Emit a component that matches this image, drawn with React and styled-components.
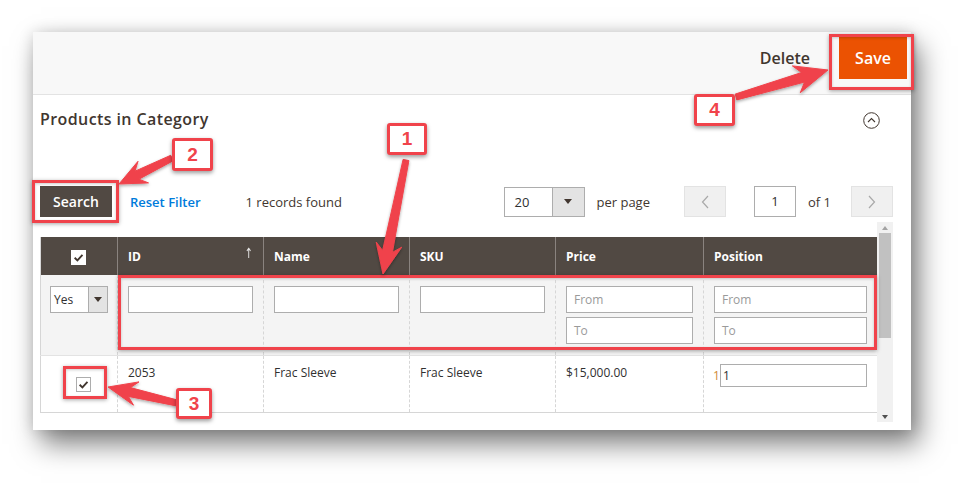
import React from 'react';
import styled, { createGlobalStyle } from 'styled-components';

const RED = '#f0434b';

const Global = createGlobalStyle`
  html, body { margin: 0; padding: 0; background: #fff; }
  body { font-family: "Open Sans", "Liberation Sans", sans-serif; color: #41362f; }
  * { box-sizing: border-box; }
`;

const Page = styled.div`
  position: relative;
  width: 980px;
  height: 495px;
  overflow: hidden;
  background: #fff;
  padding: 32px 0 0 33px;
`;

const Panel = styled.div`
  width: 878px;
  height: 398px;
  background: #fff;
  box-shadow: 8px 14px 26px rgba(0, 0, 0, 0.5), 0 0 14px rgba(0, 0, 0, 0.14);
  display: flex;
  flex-direction: column;
`;

const TopBar = styled.div`
  height: 63px;
  flex: none;
  background: #f8f8f8;
  border-bottom: 1px solid #e3e3e3;
  display: flex;
  align-items: flex-start;
  justify-content: flex-end;
  padding: 5px 4px 0 0;
`;

const DeleteLink = styled.span`
  font-size: 16px;
  font-weight: 600;
  color: #41362f;
  line-height: 42px;
  margin-right: 29px;
`;

const SaveButton = styled.button`
  width: 68px;
  height: 42px;
  background: #eb5202;
  border: 1px solid #eb5202;
  color: #fff;
  font-family: "Open Sans", "Liberation Sans", sans-serif;
  font-size: 16px;
  font-weight: 600;
  padding: 0;
`;

const Content = styled.div`
  flex: 1;
  display: flex;
  flex-direction: column;
  padding: 0 18px 0 7px;
`;

const TitleRow = styled.div`
  height: 48px;
  display: flex;
  align-items: center;
  justify-content: space-between;
`;

const Title = styled.h2`
  margin: 0;
  font-size: 16px;
  font-weight: 600;
  color: #41362f;
  letter-spacing: 0.4px;
`;

const CollapseIcon = styled.svg`
  margin-right: 13px;
  margin-top: 3px;
`;

const Toolbar = styled.div`
  margin-top: 43px;
  height: 31px;
  display: flex;
  align-items: center;
  font-size: 13px;
`;

const SearchButton = styled.button`
  width: 72px;
  height: 31px;
  background: #514943;
  border: 1px solid #514943;
  color: #fff;
  font-family: "Open Sans", "Liberation Sans", sans-serif;
  font-size: 14px;
  font-weight: 600;
  padding: 0;
`;

const ResetLink = styled.span`
  margin-left: 18px;
  color: #007bdb;
  font-weight: 600;
  font-size: 13px;
`;

const Records = styled.span`
  margin-left: 45px;
  color: #41362f;
  font-size: 13px;
`;

const RightGroup = styled.div`
  margin-left: auto;
  display: flex;
  align-items: center;
`;

const PageSizeSelect = styled.div`
  width: 81px;
  height: 30px;
  border: 1px solid #adadad;
  display: flex;
  background: #fff;
`;

const SelectValue = styled.span`
  flex: 1;
  padding-left: 10px;
  line-height: 28px;
  font-size: 13px;
  color: #303030;
`;

const SelectArrow = styled.span`
  width: ${(p) => p.$w}px;
  background: #e3e3e3;
  border-left: 1px solid #adadad;
  display: flex;
  align-items: center;
  justify-content: center;
  &::after {
    content: '';
    border-left: 4px solid transparent;
    border-right: 4px solid transparent;
    border-top: 5px solid #41362f;
  }
`;

const Label = styled.span`
  margin-left: ${(p) => p.$ml}px;
  color: #41362f;
  font-size: 13px;
`;

const PagerButton = styled.div`
  margin-left: ${(p) => p.$ml}px;
  width: 42px;
  height: 31px;
  background: #f0f0f0;
  border: 1px solid #e3e3e3;
  display: flex;
  align-items: center;
  justify-content: center;
`;

const PageInput = styled.div`
  margin-left: 28px;
  width: 42px;
  height: 31px;
  border: 1px solid #adadad;
  background: #fff;
  text-align: center;
  line-height: 29px;
  font-size: 13px;
  color: #303030;
`;

const GridWrap = styled.div`
  margin-top: 5px;
  height: 200px;
  display: flex;
`;

const TableArea = styled.div`
  width: 837px;
  padding-top: 15px;
`;

const Scrollbar = styled.div`
  width: 16px;
  background: #f1f1f1;
  display: flex;
  flex-direction: column;
  align-items: center;
`;

const ScrollArrow = styled.div`
  height: 11px;
  display: flex;
  align-items: center;
  justify-content: center;
  &::after {
    content: '';
    border-left: 3.5px solid transparent;
    border-right: 3.5px solid transparent;
    ${(p) => (p.$down ? 'border-top: 4px solid #505050;' : 'border-bottom: 4px solid #a3a3a3;')}
  }
`;

const ScrollThumb = styled.div`
  width: 12px;
  height: 105px;
  background: #c1c1c1;
`;

const ScrollTrack = styled.div`
  flex: 1;
`;

const Table = styled.table`
  width: 837px;
  table-layout: fixed;
  border-collapse: collapse;
  font-size: 12px;
  border-left: 1px solid #d6d6d6;
  border-right: 1px solid #d6d6d6;
  border-bottom: 1px solid #d6d6d6;
`;

const Th = styled.th`
  height: 38px;
  background: #514943;
  color: #fff;
  font-weight: 700;
  font-size: 12px;
  text-align: left;
  padding: 0 11px 0 10px;
  border-left: 1px solid #8a837f;
  &:first-child {
    border-left: none;
    text-align: center;
  }
`;

const HeadInner = styled.div`
  display: flex;
  justify-content: space-between;
  align-items: center;
`;

const SortArrow = styled.span`
  font-family: "DejaVu Sans", sans-serif;
  font-size: 14px;
  font-weight: 400;
  color: #e8e8e8;
  margin-top: -6px;
  margin-right: -3px;
  transform: scaleX(0.7);
`;

const FilterTd = styled.td`
  background: #f4f4f4;
  padding: 11px 10px;
  height: 80px;
  vertical-align: top;
  border-left: 1px dashed #d6d6d6;
  &:first-child {
    border-left: none;
    padding-left: 9px;
  }
`;

const FilterInput = styled.div`
  height: 27px;
  border: 1px solid #adadad;
  background: #fff;
  padding-left: 7px;
  line-height: 25px;
  font-size: 12px;
  color: #9a9a9a;
  & + & {
    margin-top: 4px;
  }
`;

const YesSelect = styled.div`
  width: 58px;
  height: 27px;
  border: 1px solid #adadad;
  background: #fff;
  display: flex;
`;

const YesValue = styled.span`
  flex: 1;
  padding-left: 3px;
  line-height: 25px;
  font-size: 12px;
  color: #303030;
`;

const DataTd = styled.td`
  height: 57px;
  padding: 8px 10px;
  vertical-align: top;
  color: #303030;
  font-size: 12px;
  line-height: 18px;
  border-left: 1px dashed #d6d6d6;
  border-top: 1px solid #e3e3e3;
  &:first-child {
    border-left: none;
    text-align: center;
    padding: 19px 0 0 8px;
  }
`;

const CheckBox = styled.span`
  display: inline-flex;
  width: ${(p) => p.$size}px;
  height: ${(p) => p.$size}px;
  background: #fff;
  border: 1px solid ${(p) => (p.$light ? '#fff' : '#adadad')};
  align-items: center;
  justify-content: center;
  vertical-align: middle;
`;

const PositionCell = styled.div`
  display: flex;
  align-items: center;
  margin-left: -1px;
`;

const PositionLabel = styled.span`
  color: #d08a36;
  width: 7px;
`;

const PositionInput = styled.div`
  flex: 1;
  height: 23px;
  border: 1px solid #adadad;
  background: #fff;
  padding-left: 2px;
  line-height: 21px;
  font-size: 12px;
  color: #303030;
`;

/* Annotation overlays */
const Highlight = styled.div`
  position: absolute;
  left: ${(p) => p.$x}px;
  top: ${(p) => p.$y}px;
  width: ${(p) => p.$w}px;
  height: ${(p) => p.$h}px;
  border: 3px solid ${RED};
  box-shadow: 0 1px 4px rgba(0, 0, 0, 0.35), inset 0 1px 3px rgba(0, 0, 0, 0.2);
  pointer-events: none;
`;

const Badge = styled.div`
  position: absolute;
  left: ${(p) => p.$x}px;
  top: ${(p) => p.$y}px;
  width: ${(p) => p.$w}px;
  height: ${(p) => p.$h}px;
  background: #fff;
  border: 3px solid ${RED};
  border-radius: 3px;
  box-shadow: 0 2px 4px rgba(0, 0, 0, 0.4);
  color: ${RED};
  font-family: "Liberation Sans", Arial, sans-serif;
  font-weight: 700;
  font-size: 19px;
  display: flex;
  align-items: center;
  justify-content: center;
`;

const ArrowLayer = styled.svg`
  position: absolute;
  left: 0;
  top: 0;
  pointer-events: none;
`;

function arrowPoints(sx, sy, tx, ty, headLen, headW, w0, w1) {
  const dx = tx - sx;
  const dy = ty - sy;
  const L = Math.hypot(dx, dy);
  const ux = dx / L;
  const uy = dy / L;
  const nx = -uy;
  const ny = ux;
  const bx = tx - ux * headLen;
  const by = ty - uy * headLen;
  const p = (x, y) => `${x.toFixed(1)},${y.toFixed(1)}`;
  return [
    p(sx + (nx * w0) / 2, sy + (ny * w0) / 2),
    p(bx + ux * 4 + (nx * w1) / 2, by + uy * 4 + (ny * w1) / 2),
    p(bx - ux * 3 + (nx * headW) / 2, by - uy * 3 + (ny * headW) / 2),
    p(tx, ty),
    p(bx - ux * 3 - (nx * headW) / 2, by - uy * 3 - (ny * headW) / 2),
    p(bx + ux * 4 - (nx * w1) / 2, by + uy * 4 - (ny * w1) / 2),
    p(sx - (nx * w0) / 2, sy - (ny * w0) / 2),
  ].join(' ');
}

const arrows = [
  { s: [406, 160], t: [383, 274], hl: 27, hw: 26, w0: 6, w1: 10 },
  { s: [172, 158], t: [119, 184], hl: 24, hw: 24, w0: 6, w1: 9 },
  { s: [177, 403], t: [108, 387], hl: 26, hw: 24, w0: 6, w1: 9 },
  { s: [736, 97], t: [828, 70], hl: 30, hw: 28, w0: 6, w1: 10 },
];

const Check = ({ size = 10, color = '#41362f' }) => (
  <svg width={size} height={size} viewBox="0 0 10 10">
    <path d="M1.5 5.2 L4 7.6 L8.6 2.6" fill="none" stroke={color} strokeWidth="1.7" />
  </svg>
);

const columns = [
  { key: 'id', label: 'ID', sort: true },
  { key: 'name', label: 'Name' },
  { key: 'sku', label: 'SKU' },
  { key: 'price', label: 'Price' },
  { key: 'position', label: 'Position' },
];

const widths = [77, 146, 146, 146, 148, 174];

export default function App() {
  return (
    <Page>
      <Global />
      <Panel>
        <TopBar>
          <DeleteLink>Delete</DeleteLink>
          <SaveButton>Save</SaveButton>
        </TopBar>
        <Content>
          <TitleRow>
            <Title>Products in Category</Title>
            <CollapseIcon width="17" height="17" viewBox="0 0 17 17">
              <circle cx="8.5" cy="8.5" r="7.8" fill="none" stroke="#41362f" strokeWidth="1" />
              <path d="M5 10 L8.5 6.5 L12 10" fill="none" stroke="#41362f" strokeWidth="1.1" />
            </CollapseIcon>
          </TitleRow>
          <Toolbar>
            <SearchButton>Search</SearchButton>
            <ResetLink>Reset Filter</ResetLink>
            <Records>1 records found</Records>
            <RightGroup>
              <PageSizeSelect>
                <SelectValue>20</SelectValue>
                <SelectArrow $w={32} />
              </PageSizeSelect>
              <Label $ml={12}>per page</Label>
              <PagerButton $ml={34}>
                <svg width="8" height="14" viewBox="0 0 8 14">
                  <path d="M7 1 L1.5 7 L7 13" fill="none" stroke="#a9a9a9" strokeWidth="1.2" />
                </svg>
              </PagerButton>
              <PageInput>1</PageInput>
              <Label $ml={12}>of 1</Label>
              <PagerButton $ml={20}>
                <svg width="8" height="14" viewBox="0 0 8 14">
                  <path d="M1 1 L6.5 7 L1 13" fill="none" stroke="#a9a9a9" strokeWidth="1.2" />
                </svg>
              </PagerButton>
            </RightGroup>
          </Toolbar>
          <GridWrap>
            <TableArea>
              <Table>
                <colgroup>
                  {widths.map((w, i) => (
                    <col key={i} style={{ width: w }} />
                  ))}
                </colgroup>
                <thead>
                  <tr>
                    <Th>
                      <CheckBox $size={15} $light>
                        <Check size={11} />
                      </CheckBox>
                    </Th>
                    {columns.map((c) => (
                      <Th key={c.key}>
                        <HeadInner>
                          <span>{c.label}</span>
                          {c.sort && <SortArrow>↑</SortArrow>}
                        </HeadInner>
                      </Th>
                    ))}
                  </tr>
                  <tr>
                    <FilterTd>
                      <YesSelect>
                        <YesValue>Yes</YesValue>
                        <SelectArrow $w={19} />
                      </YesSelect>
                    </FilterTd>
                    <FilterTd>
                      <FilterInput />
                    </FilterTd>
                    <FilterTd>
                      <FilterInput />
                    </FilterTd>
                    <FilterTd>
                      <FilterInput />
                    </FilterTd>
                    <FilterTd>
                      <FilterInput>From</FilterInput>
                      <FilterInput>To</FilterInput>
                    </FilterTd>
                    <FilterTd>
                      <FilterInput>From</FilterInput>
                      <FilterInput>To</FilterInput>
                    </FilterTd>
                  </tr>
                </thead>
                <tbody>
                  <tr>
                    <DataTd>
                      <CheckBox $size={15}>
                        <Check size={11} />
                      </CheckBox>
                    </DataTd>
                    <DataTd>2053</DataTd>
                    <DataTd>Frac Sleeve</DataTd>
                    <DataTd>Frac Sleeve</DataTd>
                    <DataTd>$15,000.00</DataTd>
                    <DataTd>
                      <PositionCell>
                        <PositionLabel>1</PositionLabel>
                        <PositionInput>1</PositionInput>
                      </PositionCell>
                    </DataTd>
                  </tr>
                </tbody>
              </Table>
            </TableArea>
            <Scrollbar>
              <ScrollArrow />
              <ScrollThumb />
              <ScrollTrack />
              <ScrollArrow $down />
            </Scrollbar>
          </GridWrap>
        </Content>
      </Panel>

      <Highlight $x={829} $y={34} $w={85} $h={56} />
      <Highlight $x={32} $y={180} $w={87} $h={43} />
      <Highlight $x={118} $y={275} $w={759} $h={75} />
      <Highlight $x={63} $y={366} $w={44} $h={33} />

      <ArrowLayer width="980" height="495" viewBox="0 0 980 495">
        <defs>
          <filter id="ash" x="-20%" y="-20%" width="140%" height="140%">
            <feDropShadow dx="0" dy="1.5" stdDeviation="1.5" floodColor="#000" floodOpacity="0.35" />
          </filter>
        </defs>
        {arrows.map((a, i) => (
          <polygon
            key={i}
            points={arrowPoints(a.s[0], a.s[1], a.t[0], a.t[1], a.hl, a.hw, a.w0, a.w1)}
            fill={RED}
            strokeLinejoin="round"
            stroke={RED}
            strokeWidth="1"
            filter="url(#ash)"
          />
        ))}
      </ArrowLayer>

      <Badge $x={387} $y={123} $w={40} $h={32}>1</Badge>
      <Badge $x={172} $y={138} $w={41} $h={33}>2</Badge>
      <Badge $x={176} $y={388} $w={36} $h={31}>3</Badge>
      <Badge $x={694} $y={94} $w={41} $h={32}>4</Badge>
    </Page>
  );
}
